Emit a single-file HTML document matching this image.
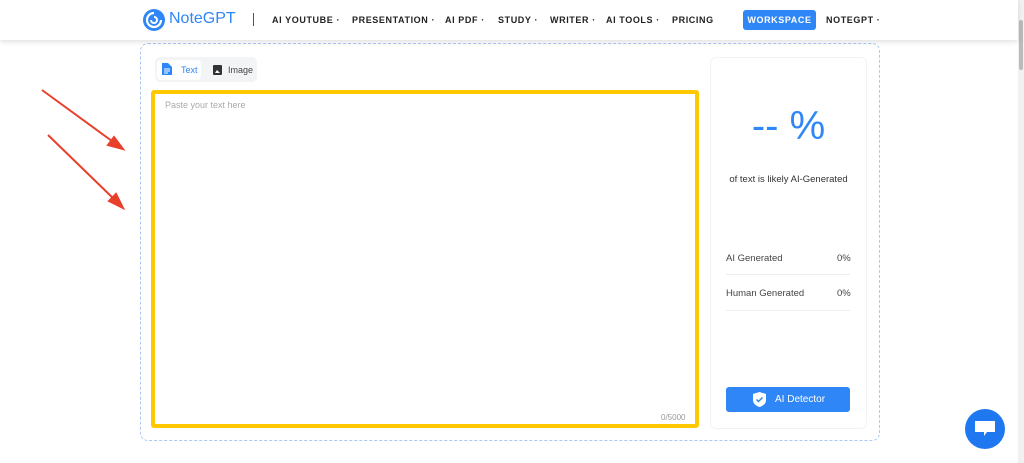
<!DOCTYPE html><html><head><style>
body{margin:0;width:1024px;height:463px;background:#fff;font-family:"Liberation Sans",sans-serif;position:relative;overflow:hidden}
.hdr{position:absolute;left:0;top:0;width:1018px;height:40px;background:#fff;box-shadow:0 2px 5px rgba(0,0,0,.12);z-index:2}
.nav{position:absolute;top:15px;font-size:9px;font-weight:bold;letter-spacing:.6px;color:#222}
.a{position:absolute}
</style></head><body>
<div class="hdr">
<svg class="a" style="left:142px;top:8px" width="24" height="24" viewBox="0 0 24 24"><circle cx="12" cy="12" r="11" fill="#2f86f6"/><path d="M12 5a7 7 0 1 0 7 7" stroke="#fff" stroke-width="2.2" fill="none"/><path d="M12 9a3 3 0 1 1-3 3" stroke="#fff" stroke-width="2" fill="none"/></svg>
<div class="a" style="left:169px;top:10px;font-size:16px;color:#2f86f6">NoteGPT</div>
<div class="a" style="left:253px;top:13px;width:1px;height:13px;background:#555"></div>
<div class="nav" style="left:272px">AI YOUTUBE ·</div>
<div class="nav" style="left:352px">PRESENTATION ·</div>
<div class="nav" style="left:445px">AI PDF ·</div>
<div class="nav" style="left:498px">STUDY ·</div>
<div class="nav" style="left:550px">WRITER ·</div>
<div class="nav" style="left:606px">AI TOOLS ·</div>
<div class="nav" style="left:672px">PRICING</div>
<div class="a" style="left:743px;top:10px;width:73px;height:20px;background:#2f86f6;border-radius:3px;color:#fff;font-size:9px;font-weight:bold;letter-spacing:.6px;text-align:center;line-height:20px">WORKSPACE</div>
<div class="nav" style="left:826px">NOTEGPT ·</div>
</div>
<div class="a" style="left:1018px;top:0;width:6px;height:463px;background:#f1f1f1"></div>
<div class="a" style="left:1019px;top:20px;width:4px;height:50px;background:#bbb;border-radius:2px"></div>
<svg class="a" style="left:0;top:0" width="140" height="463"><g stroke="#e8402a" stroke-width="2" fill="#e8402a"><line x1="42" y1="90" x2="116" y2="144"/><polygon points="123,149 108,145 114,137"/><line x1="48" y1="135" x2="117" y2="202"/><polygon points="123,208 109,201 116,194"/></g></svg>
<div class="a" style="left:140px;top:43px;width:738px;height:396px;border:1px dashed #a9c8f5;border-radius:8px"></div>
<div class="a" style="left:155px;top:57px;width:102px;height:25px;background:#f3f4f6;border-radius:5px"></div>
<div class="a" style="left:157px;top:60px;width:44px;height:20px;background:#fff;border-radius:4px"></div>
<svg class="a" style="left:162px;top:63px" width="10" height="12"><path d="M0 0h6l4 4v8H0z" fill="#2f86f6"/><path d="M2 6h6M2 8h6M2 10h4" stroke="#fff" stroke-width="1"/></svg>
<div class="a" style="left:181px;top:65px;font-size:9px;color:#2f86f6">Text</div>
<svg class="a" style="left:213px;top:65px" width="9" height="10"><rect width="9" height="10" rx="1" fill="#333"/><path d="M2 8l2-3 3 3z" fill="#fff"/></svg>
<div class="a" style="left:228px;top:65px;font-size:9px;color:#444">Image</div>
<div class="a" style="left:151px;top:90px;width:540px;height:330px;border:4px solid #ffc800;border-radius:3px"></div>
<div class="a" style="left:165px;top:100px;font-size:9px;color:#aaa">Paste your text here</div>
<div class="a" style="left:661px;top:413px;font-size:8px;color:#999">0/5000</div>
<div class="a" style="left:710px;top:57px;width:155px;height:370px;border:1px solid #f3f3f3;border-radius:6px"></div>
<div class="a" style="left:710px;top:104px;width:157px;text-align:center;font-size:40px;color:#2f86f6">-- %</div>
<div class="a" style="left:710px;top:174px;width:157px;text-align:center;font-size:9.5px;color:#333">of text is likely AI-Generated</div>
<div class="a" style="left:726px;top:253px;font-size:9.5px;color:#444">AI Generated</div>
<div class="a" style="left:837px;top:253px;font-size:9.5px;color:#444">0%</div>
<div class="a" style="left:726px;top:274px;width:124px;height:1px;background:#eee"></div>
<div class="a" style="left:726px;top:288px;font-size:9.5px;color:#444">Human Generated</div>
<div class="a" style="left:837px;top:288px;font-size:9.5px;color:#444">0%</div>
<div class="a" style="left:726px;top:310px;width:124px;height:1px;background:#eee"></div>
<div class="a" style="left:726px;top:387px;width:124px;height:25px;background:#2f86f6;border-radius:3px"></div>
<svg class="a" style="left:753px;top:392px" width="13" height="15"><path d="M6.5 0L13 2v6c0 4-3.5 6-6.5 7C3.5 14 0 12 0 8V2z" fill="#fff"/><path d="M3.5 7.5l2 2 4-4" stroke="#2f86f6" stroke-width="1.5" fill="none"/></svg>
<div class="a" style="left:775px;top:394px;font-size:10px;color:#fff">AI Detector</div>
<div class="a" style="left:965px;top:409px;width:40px;height:40px;background:#1f78f0;border-radius:50%"></div>
<svg class="a" style="left:975px;top:421px" width="20" height="16"><path d="M0 0h20v11H12l-3 4v-4H0z" fill="#fff"/></svg>
</body></html>
